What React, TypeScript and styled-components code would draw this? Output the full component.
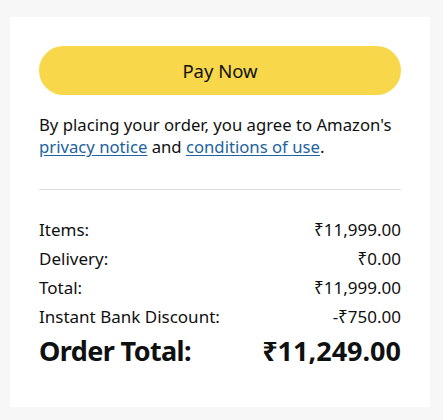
import * as React from 'react';
import styled, { createGlobalStyle } from 'styled-components';

const GlobalStyle = createGlobalStyle`
  html, body {
    margin: 0;
    padding: 0;
    background: #f7f7f7;
  }
  body {
    font-family: "Noto Sans", "Open Sans", Arial, sans-serif;
    color: #0f1111;
  }
`;

const Page = styled.div`
  width: 443px;
  height: 420px;
  padding: 17px 13px 13px 10px;
  box-sizing: border-box;
`;

const Card = styled.div`
  background: #fff;
  height: 390px;
  padding: 29px 29px 0;
  box-sizing: border-box;
`;

const PayButton = styled.button`
  display: block;
  width: 100%;
  height: 49px;
  border: none;
  border-radius: 25px;
  background: #f8d84a;
  color: #0f1111;
  font-family: inherit;
  font-size: 18.5px;
  cursor: pointer;
`;

const Agreement = styled.p`
  margin: 19px 0 0;
  font-size: 16.7px;
  line-height: 22px;
`;

const Link = styled.a`
  color: #2162a1;
  text-decoration: underline;
  text-underline-offset: 2px;
`;

const Divider = styled.hr`
  margin: 31px 0 0;
  border: none;
  border-top: 1px solid #dddddd;
`;

const Summary = styled.div`
  margin-top: 25px;
  display: flex;
  flex-direction: column;
`;

const Row = styled.div<{ $total?: boolean }>`
  display: flex;
  justify-content: space-between;
  align-items: center;
  font-size: ${({ $total }) => ($total ? '27px' : '17px')};
  font-weight: ${({ $total }) => ($total ? 700 : 400)};
  line-height: ${({ $total }) => ($total ? '38px' : '29px')};
  margin-top: ${({ $total }) => ($total ? '1px' : '0')};
`;

const TotalLabel = styled.span`
  letter-spacing: -0.6px;
`;

const rows = [
  { label: 'Items:', value: '₹11,999.00' },
  { label: 'Delivery:', value: '₹0.00' },
  { label: 'Total:', value: '₹11,999.00' },
  { label: 'Instant Bank Discount:', value: '-₹750.00' },
];

export default function App() {
  return (
    <>
      <GlobalStyle />
      <Page>
        <Card>
          <PayButton type="button">Pay Now</PayButton>
          <Agreement>
            By placing your order, you agree to Amazon's{' '}
            <Link href="#">privacy notice</Link> and{' '}
            <Link href="#">conditions of use</Link>.
          </Agreement>
          <Divider />
          <Summary>
            {rows.map((r) => (
              <Row key={r.label}>
                <span>{r.label}</span>
                <span>{r.value}</span>
              </Row>
            ))}
            <Row $total>
              <TotalLabel>Order Total:</TotalLabel>
              <span>₹11,249.00</span>
            </Row>
          </Summary>
        </Card>
      </Page>
    </>
  );
}
